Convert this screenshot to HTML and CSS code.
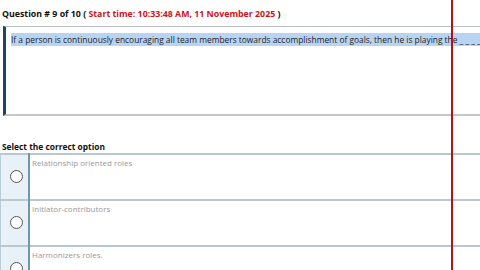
FILE: index.html
```html
<!DOCTYPE html>
<html lang="en">
<head>
    <meta charset="UTF-8">
    <meta name="viewport" content="width=device-width, initial-scale=1.0">
    <title>Quiz</title>
    <link rel="stylesheet" href="styles.css">
</head>
<body>
    <div class="page">
        <div class="q-title">
            Question # 9 of 10 ( <span class="start-time">Start time: 10:33:48 AM, 11 November 2025</span> )
        </div>
        <div class="q-box">
            <span class="q-text">If a person is continuously encouraging all team members towards accomplishment of goals, then he is playing the _ _ _ _</span>
        </div>
        <div class="opt-label">Select the correct option</div>
        <table class="options">
            <tr>
                <td class="radio-cell"><span class="radio"></span></td>
                <td class="opt-text">Relationship oriented roles</td>
            </tr>
            <tr>
                <td class="radio-cell"><span class="radio"></span></td>
                <td class="opt-text">Initiator-contributors</td>
            </tr>
            <tr>
                <td class="radio-cell"><span class="radio"></span></td>
                <td class="opt-text">Harmonizers roles.</td>
            </tr>
        </table>
    </div>
    <div class="red-line"></div>
</body>
</html>
```

FILE: styles.css
```css
html, body {
    margin: 0;
    height: 270px;
    overflow: hidden;
}
body {
    font-family: "Open Sans", "Noto Sans", sans-serif;
    background: #fff;
}
.page {
    width: 480px;
    overflow: hidden;
}
.q-title {
    font-size: 8.8px;
    font-weight: 700;
    color: #111;
    padding: 8px 2px 0 2px;
    height: 18px;
    box-sizing: border-box;
    white-space: nowrap;
}
.start-time {
    color: #d0121b;
}
.q-box {
    margin-top: 8px;
    border-top: 1px solid #b9bec3;
    border-left: 3px solid #1c4663;
    border-bottom: 2px solid #c4c7ca;
    margin-left: 3px;
    height: 90px;
    padding: 5px 0 0 5px;
    line-height: 10px;
    box-sizing: border-box;
    white-space: nowrap;
    overflow: hidden;
}
.q-text {
    font-size: 8.4px;
    color: #222;
    background: #b9d4f2;
    padding: 1px 0;
}
.opt-label {
    margin-top: 25px;
    padding-left: 2px;
    font-size: 8.4px;
    font-weight: 700;
    color: #111;
}
.options {
    border-collapse: collapse;
    margin-top: 1px;
    width: 480px;
}
.options td {
    border-top: 2px solid #b8c8ce;
    height: 42px;
    vertical-align: top;
    padding: 0;
}
.radio-cell {
    width: 24px;
    background: #e8f1f7;
    border-left: 1px solid #b8cdd8;
    border-right: 2px solid #6f98a8;
    text-align: center;
    vertical-align: middle !important;
    padding-left: 3px !important;
}
.radio {
    display: inline-block;
    width: 11px;
    height: 11px;
    border: 1.5px solid #555;
    border-radius: 50%;
    background: #fff;
    margin-top: 3px;
}
.opt-text {
    font-size: 8px;
    color: #999;
    padding: 2px 0 0 2px !important;
}
.red-line {
    position: absolute;
    top: 0;
    left: 451px;
    width: 2px;
    height: 270px;
    background: #b3121a;
}
```
